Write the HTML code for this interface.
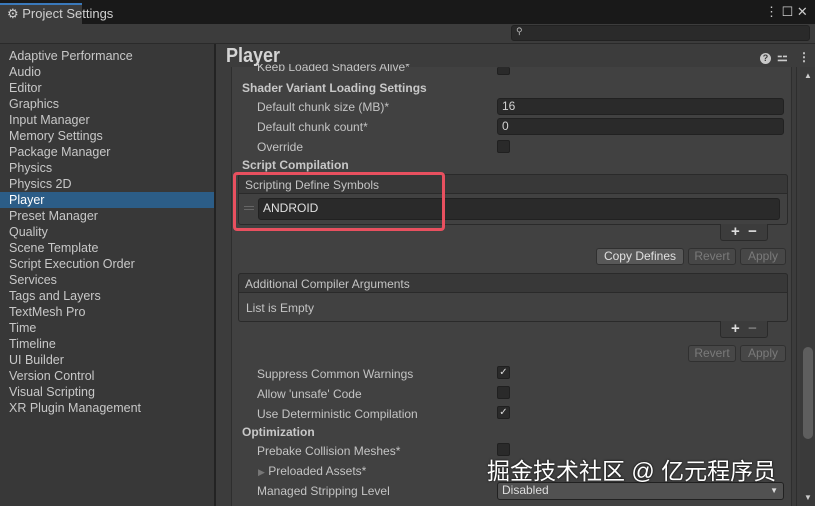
<!DOCTYPE html><html><head><meta charset="utf-8"><style>
*{margin:0;padding:0;box-sizing:border-box}
body{width:815px;height:506px;overflow:hidden;background:#383838;font-family:"Liberation Sans",sans-serif;font-size:12px;color:#c4c4c4;position:relative}
.a{position:absolute;white-space:nowrap}
.t{line-height:14px}
.b{font-weight:bold;color:#c8c8c8}
.f{position:absolute;background:#2a2a2a;border:1px solid #212121;border-radius:3px;color:#d2d2d2;padding-left:4px;line-height:15px}
.cb{position:absolute;width:13px;height:13px;background:#2a2a2a;border:1px solid #202020;border-radius:2px;color:#ddd;font-size:10px;line-height:11px;text-align:center}
.btn{position:absolute;background:#585858;border:1px solid #303030;border-radius:3px;text-align:center;line-height:15px;color:#e0e0e0}
.dis{background:#474747;color:#7a7a7a}
</style></head><body>
<div class="a" style="left:0;top:0;width:815px;height:24px;background:#191919"></div>
<div class="a" style="left:0;top:3px;width:82px;height:21px;background:#3c3c3c;border-top:2px solid #3a79bb"></div>
<div class="a t" style="left:7px;top:7px;color:#d0d0d0;font-size:13px">⚙ Project Settings</div>
<div class="a" style="left:765px;top:4px;color:#ccc;font-size:13px">⋮ ☐ ✕</div>
<div class="a" style="left:0;top:24px;width:815px;height:20px;background:#3c3c3c;border-bottom:1px solid #2a2a2a"></div>
<div class="a" style="left:511px;top:25px;width:299px;height:16px;background:#2a2a2a;border:1px solid #222;border-radius:3px"></div>
<div class="a" style="left:516px;top:26px;font-size:9px;color:#bbb">⚲</div>
<div class="a" style="left:214px;top:44px;width:2px;height:462px;background:#232323"></div>
<div class="a" style="left:0;top:192px;width:214px;height:16px;background:#2c5d87"></div>
<div class="a" style="left:9px;top:48px;line-height:16px;font-size:12.5px;color:#c8c8c8">Adaptive Performance<br>Audio<br>Editor<br>Graphics<br>Input Manager<br>Memory Settings<br>Package Manager<br>Physics<br>Physics 2D<br><span style="color:#fff">Player</span><br>Preset Manager<br>Quality<br>Scene Template<br>Script Execution Order<br>Services<br>Tags and Layers<br>TextMesh Pro<br>Time<br>Timeline<br>UI Builder<br>Version Control<br>Visual Scripting<br>XR Plugin Management</div>
<div class="a" style="left:216px;top:44px;width:599px;height:462px;background:#3c3c3c"></div>
<div class="a" style="left:231px;top:67px;width:561px;height:439px;background:#414141;border-left:1px solid #2e2e2e;border-right:1px solid #2e2e2e"></div>
<div class="a" style="left:796px;top:67px;width:1px;height:439px;background:#2e2e2e"></div>
<div class="a" style="left:800px;top:67px;width:15px;height:439px;background:#3a3a3a"></div>
<div class="a" style="left:803px;top:347px;width:10px;height:92px;background:#5e5e5e;border-radius:5px"></div>
<div class="a" style="left:804px;top:71px;font-size:8px;color:#ccc">▲</div>
<div class="a" style="left:804px;top:493px;font-size:8px;color:#ccc">▼</div>
<div class="a" style="left:226px;top:45px;font-size:20px;font-weight:bold;color:#d4d4d4;line-height:22px;transform:scaleX(0.9);transform-origin:left">Player</div>
<div class="a" style="left:760px;top:53px;width:11px;height:11px;border-radius:50%;background:#c8c8c8;color:#3c3c3c;font-size:9px;font-weight:bold;text-align:center;line-height:11px">?</div>
<div class="a" style="left:777px;top:50px;font-size:12px;color:#ccc;font-weight:bold">⚍</div>
<div class="a" style="left:798px;top:50px;font-size:12px;color:#ccc;font-weight:bold">⋮</div>
<div class="a t" style="left:257px;top:64px;height:7px;overflow:hidden;line-height:6px">Keep Loaded Shaders Alive*</div>
<div class="cb" style="left:497px;top:67px;height:8px;border-top:none"></div>
<div class="a t b" style="left:242px;top:81px">Shader Variant Loading Settings</div>
<div class="a t" style="left:257px;top:100px">Default chunk size (MB)*</div>
<div class="f" style="left:497px;top:98px;width:287px;height:17px">16</div>
<div class="a t" style="left:257px;top:120px">Default chunk count*</div>
<div class="f" style="left:497px;top:118px;width:287px;height:17px">0</div>
<div class="a t" style="left:257px;top:140px">Override</div>
<div class="cb" style="left:497px;top:140px"></div>
<div class="a t b" style="left:242px;top:158px">Script Compilation</div>
<div class="a" style="left:238px;top:174px;width:550px;height:51px;background:#414141;border:1px solid #2a2a2a;border-radius:3px"></div>
<div class="a" style="left:238px;top:174px;width:550px;height:20px;background:#383838;border:1px solid #2a2a2a;border-radius:3px 3px 0 0"></div>
<div class="a t" style="left:245px;top:178px">Scripting Define Symbols</div>
<div class="a" style="left:244px;top:206px;width:10px;height:4px;border-top:1px solid #666;border-bottom:1px solid #666"></div>
<div class="f" style="left:258px;top:198px;width:522px;height:22px;line-height:19px;color:#e0e0e0">ANDROID</div>
<div class="a" style="left:233px;top:172px;width:212px;height:59px;border:3px solid #e8505f;border-radius:4px"></div>
<div class="a" style="left:720px;top:224px;width:48px;height:17px;background:#3c3c3c;border:1px solid #2a2a2a;border-top:none;border-radius:0 0 3px 3px;color:#ddd;font-size:15px;font-weight:bold;line-height:15px;padding-left:10px">+ &nbsp;−</div>
<div class="btn" style="left:596px;top:248px;width:88px;height:17px">Copy Defines</div>
<div class="btn dis" style="left:688px;top:248px;width:48px;height:17px">Revert</div>
<div class="btn dis" style="left:740px;top:248px;width:46px;height:17px">Apply</div>
<div class="a" style="left:238px;top:273px;width:550px;height:49px;background:#414141;border:1px solid #2a2a2a;border-radius:3px"></div>
<div class="a" style="left:238px;top:273px;width:550px;height:20px;background:#383838;border:1px solid #2a2a2a;border-radius:3px 3px 0 0"></div>
<div class="a t" style="left:245px;top:277px">Additional Compiler Arguments</div>
<div class="a t" style="left:246px;top:301px">List is Empty</div>
<div class="a" style="left:720px;top:321px;width:48px;height:17px;background:#3c3c3c;border:1px solid #2a2a2a;border-top:none;border-radius:0 0 3px 3px;color:#ddd;font-size:15px;font-weight:bold;line-height:15px;padding-left:10px">+ &nbsp;<span style="color:#777">−</span></div>
<div class="btn dis" style="left:688px;top:345px;width:48px;height:17px">Revert</div>
<div class="btn dis" style="left:740px;top:345px;width:46px;height:17px">Apply</div>
<div class="a t" style="left:257px;top:367px">Suppress Common Warnings</div>
<div class="cb" style="left:497px;top:366px">✓</div>
<div class="a t" style="left:257px;top:387px">Allow 'unsafe' Code</div>
<div class="cb" style="left:497px;top:386px"></div>
<div class="a t" style="left:257px;top:407px">Use Deterministic Compilation</div>
<div class="cb" style="left:497px;top:406px">✓</div>
<div class="a t b" style="left:242px;top:425px">Optimization</div>
<div class="a t" style="left:257px;top:444px">Prebake Collision Meshes*</div>
<div class="cb" style="left:497px;top:443px"></div>
<div class="a t" style="left:258px;top:464px"><span style="color:#777;font-size:9px">▶</span> Preloaded Assets*</div>
<div class="a t" style="left:257px;top:484px">Managed Stripping Level</div>
<div class="f" style="left:497px;top:482px;width:287px;height:18px;background:#515151;color:#ddd">Disabled<span style="position:absolute;right:5px;font-size:8px">▼</span></div>
<div class="a" style="left:487px;top:456px;font-family:'Liberation Sans','Noto Sans CJK SC',sans-serif;font-size:23px;color:#fff;text-shadow:0 0 2px #000;line-height:30px">掘金技术社区 @ 亿元程序员</div>
</body></html>
